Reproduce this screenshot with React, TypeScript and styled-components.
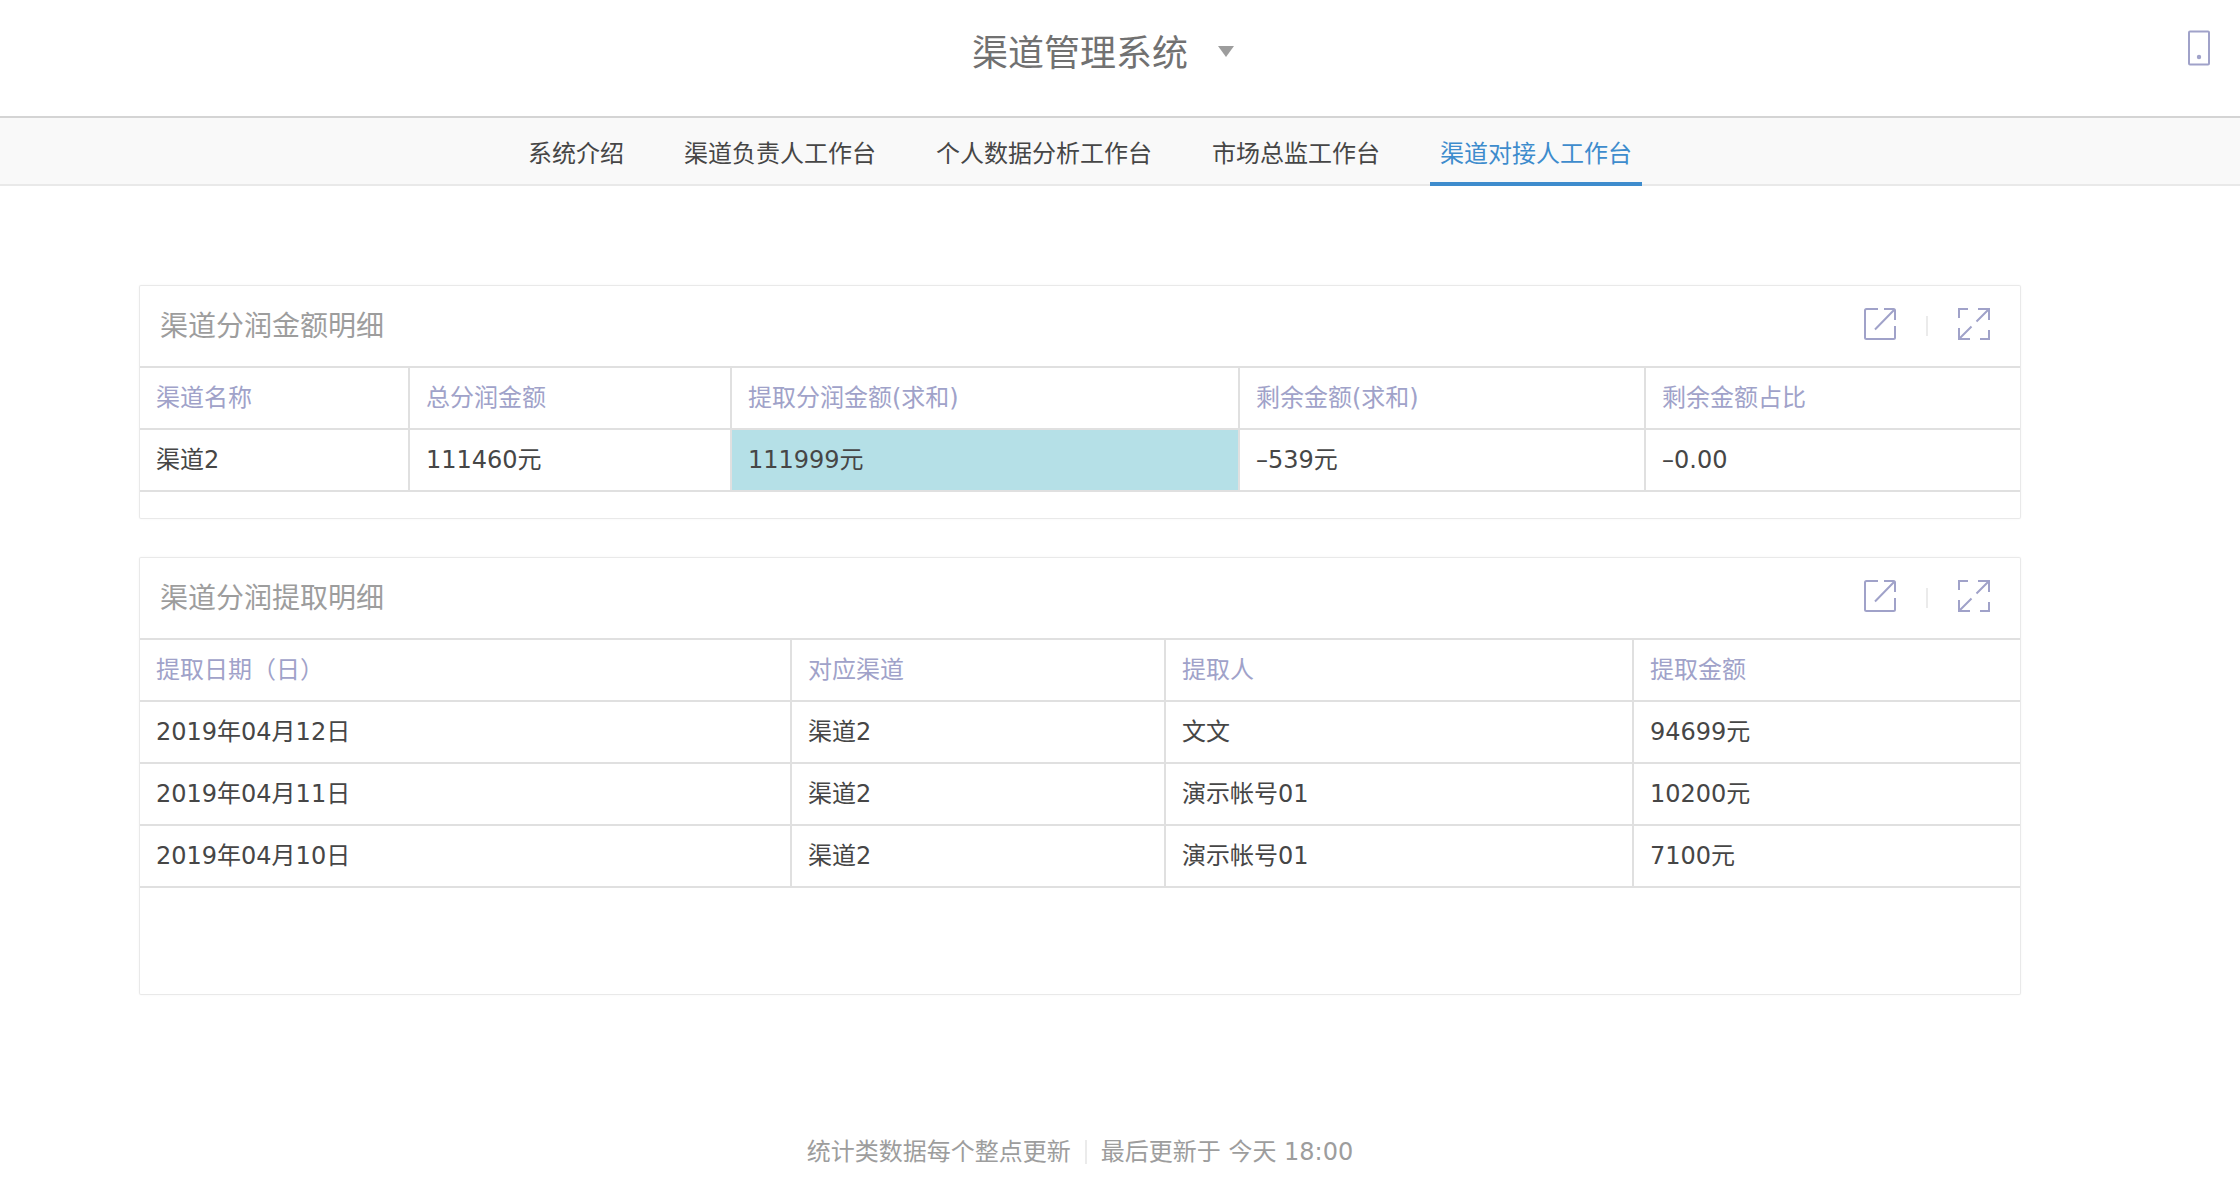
import React from "react";
import styled, { createGlobalStyle } from "styled-components";

const colors = {
  text: "#464646",
  muted: "#9d9d9d",
  title: "#717171",
  accent: "#a0a2c9",
  blue: "#3e8ccd",
  line: "#e0e0e0",
  highlight: "#b5e0e7",
};

const GlobalStyle = createGlobalStyle`
  *, *::before, *::after { box-sizing: border-box; }
  body {
    margin: 0;
    background: #fff;
    color: ${colors.text};
    font-family: "DejaVu Sans", "Noto Sans CJK SC", sans-serif;
    font-size: 24px;
    line-height: 36px;
  }
`;

const Header = styled.header`
  display: grid;
  grid-template-columns: 80px 1fr 80px 80px;
  align-items: center;
  height: 118px;
  padding-bottom: 14px;
  border-bottom: 2px solid #d4d4d4;
`;

const SystemButton = styled.button`
  grid-column: 2;
  justify-self: center;
  display: grid;
  grid-template-columns: 46px auto 16px;
  column-gap: 30px;
  align-items: center;
  margin-left: -30px;
  padding: 0;
  border: 0;
  background: none;
  color: ${colors.title};
  font: inherit;
  font-size: 36px;
  line-height: 54px;
  cursor: pointer;

  &::before {
    content: "";
  }
`;

const SystemName = styled.span`
  padding-top: 6px;
`;

const Caret = styled.span`
  border: 8px solid transparent;
  border-top: 11px solid ${colors.muted};
  border-bottom: 0;
`;

const IconButton = styled.button`
  display: flex;
  padding: 0;
  border: 0;
  background: none;
  color: ${colors.accent};
  cursor: pointer;
`;

const PhoneButton = styled(IconButton)`
  grid-column: 4;
  justify-self: start;
  padding: 0 27px;
  margin-top: -6px;
`;

const Nav = styled.nav`
  display: flex;
  justify-content: center;
  gap: 40px;
  height: 68px;
  padding-right: 80px;
  border-bottom: 2px solid #e9e9e9;
  background: #f9f9f9;
`;

const NavLink = styled.a<{ $active?: boolean }>`
  height: 68px;
  padding: 18px 10px 0;
  border-bottom: 4px solid ${(p) => (p.$active ? colors.blue : "transparent")};
  color: ${(p) => (p.$active ? colors.blue : colors.text)};
  text-decoration: none;
  white-space: nowrap;
`;

const Main = styled.main`
  display: flex;
  flex-direction: column;
  gap: 40px;
  padding: 100px 220px 0 140px;
`;

const Card = styled.section<{ $tail: number }>`
  padding-bottom: ${(p) => p.$tail}px;
  border-radius: 1px;
  background: #fff;
  box-shadow: 0 0 0 1px #e9e9e9, 0 0 3px rgba(0, 0, 0, 0.1);
`;

const CardHeader = styled.div`
  display: flex;
  justify-content: space-between;
  align-items: center;
  height: 82px;
  padding: 0 30px 0 20px;
  border-bottom: 2px solid ${colors.line};
`;

const CardTitle = styled.h2`
  margin: 0;
  padding-top: 2px;
  color: ${colors.muted};
  font-size: 28px;
  font-weight: 400;
  line-height: 40px;
`;

const Divider = styled.span<{ $size: number }>`
  width: 2px;
  height: ${(p) => p.$size}px;
  background: #ebebeb;
`;

const Actions = styled.div`
  display: flex;
  align-items: center;
  gap: 30px;

  ${IconButton} {
    padding-bottom: 4px;
  }
`;

const Table = styled.table`
  width: 100%;
  table-layout: fixed;
  border-collapse: separate;
  border-spacing: 0;
`;

const Col = styled.col<{ $width: number }>`
  width: ${(p) => p.$width}px;
`;

const HeadCell = styled.th`
  height: 62px;
  padding: 0 16px;
  border-bottom: 2px solid ${colors.line};
  color: ${colors.accent};
  font-weight: 400;
  text-align: left;

  &:not(:last-child) {
    border-right: 2px solid ${colors.line};
  }
`;

const Cell = styled.td<{ $highlight?: boolean }>`
  height: 62px;
  padding: 0 16px;
  border-bottom: 2px solid ${colors.line};
  background: ${(p) => (p.$highlight ? colors.highlight : "transparent")};

  &:not(:last-child) {
    border-right: 2px solid ${colors.line};
  }
`;

const Footer = styled.footer`
  display: flex;
  justify-content: center;
  align-items: center;
  gap: 14px;
  padding: 140px 80px 24px 0;
  color: ${colors.muted};
`;

const PhoneIcon = () => (
  <svg width="24" height="36" viewBox="0 0 24 36" fill="none" aria-hidden="true">
    <rect x="2" y="1.5" width="20" height="33" rx="1" stroke="currentColor" strokeWidth="2" />
    <circle cx="12" cy="27" r="2.2" fill="currentColor" />
  </svg>
);

const OpenIcon = () => (
  <svg width="32" height="32" viewBox="0 0 32 32" fill="none" stroke="currentColor" strokeWidth="2" aria-hidden="true">
    <path d="M14 1H2.5Q1 1 1 2.5V29.5Q1 31 2.5 31H29.5Q31 31 31 29.5V18" />
    <path d="M20 1H29.5Q31 1 31 2.5V12M30.5 1.5L11 21.5" />
  </svg>
);

const ExpandIcon = () => (
  <svg width="32" height="32" viewBox="0 0 32 32" fill="none" stroke="currentColor" strokeWidth="2" aria-hidden="true">
    <path d="M10 1H1V10M20 1H31V12M30.5 1.5L18.5 13.5" />
    <path d="M1 20V31H12M1.5 30.5L13.5 18.5M22 31H31V22" />
  </svg>
);

type ReportProps = {
  title: string;
  columns: { label: string; width: number }[];
  rows: string[][];
  highlight?: number;
  tail: number;
};

const Report = ({ title, columns, rows, highlight, tail }: ReportProps) => (
  <Card $tail={tail} aria-label={title}>
    <CardHeader>
      <CardTitle>{title}</CardTitle>
      <Actions>
        <IconButton type="button" aria-label="打开">
          <OpenIcon />
        </IconButton>
        <Divider $size={20} />
        <IconButton type="button" aria-label="全屏">
          <ExpandIcon />
        </IconButton>
      </Actions>
    </CardHeader>
    <Table>
      <colgroup>
        {columns.map((c) => (
          <Col key={c.label} $width={c.width} />
        ))}
      </colgroup>
      <thead>
        <tr>
          {columns.map((c) => (
            <HeadCell key={c.label} scope="col">
              {c.label}
            </HeadCell>
          ))}
        </tr>
      </thead>
      <tbody>
        {rows.map((row) => (
          <tr key={row[0]}>
            {row.map((value, i) => (
              <Cell key={i} $highlight={i === highlight}>
                {value}
              </Cell>
            ))}
          </tr>
        ))}
      </tbody>
    </Table>
  </Card>
);

const tabs = ["系统介绍", "渠道负责人工作台", "个人数据分析工作台", "市场总监工作台", "渠道对接人工作台"];

export default function App() {
  return (
    <>
      <GlobalStyle />
      <Header>
        <SystemButton type="button">
          <SystemName>渠道管理系统</SystemName>
          <Caret />
        </SystemButton>
        <PhoneButton type="button" aria-label="手机预览">
          <PhoneIcon />
        </PhoneButton>
      </Header>
      <Nav>
        {tabs.map((tab, i) => (
          <NavLink key={tab} href="#" $active={i === tabs.length - 1}>
            {tab}
          </NavLink>
        ))}
      </Nav>
      <Main>
        <Report
          title="渠道分润金额明细"
          columns={[
            { label: "渠道名称", width: 270 },
            { label: "总分润金额", width: 322 },
            { label: "提取分润金额(求和)", width: 508 },
            { label: "剩余金额(求和)", width: 406 },
            { label: "剩余金额占比", width: 374 },
          ]}
          rows={[["渠道2", "111460元", "111999元", "–539元", "–0.00"]]}
          highlight={2}
          tail={26}
        />
        <Report
          title="渠道分润提取明细"
          columns={[
            { label: "提取日期（日）", width: 652 },
            { label: "对应渠道", width: 374 },
            { label: "提取人", width: 468 },
            { label: "提取金额", width: 386 },
          ]}
          rows={[
            ["2019年04月12日", "渠道2", "文文", "94699元"],
            ["2019年04月11日", "渠道2", "演示帐号01", "10200元"],
            ["2019年04月10日", "渠道2", "演示帐号01", "7100元"],
          ]}
          tail={106}
        />
      </Main>
      <Footer>
        <span>统计类数据每个整点更新</span>
        <Divider $size={24} />
        <span>最后更新于 今天 18:00</span>
      </Footer>
    </>
  );
}
